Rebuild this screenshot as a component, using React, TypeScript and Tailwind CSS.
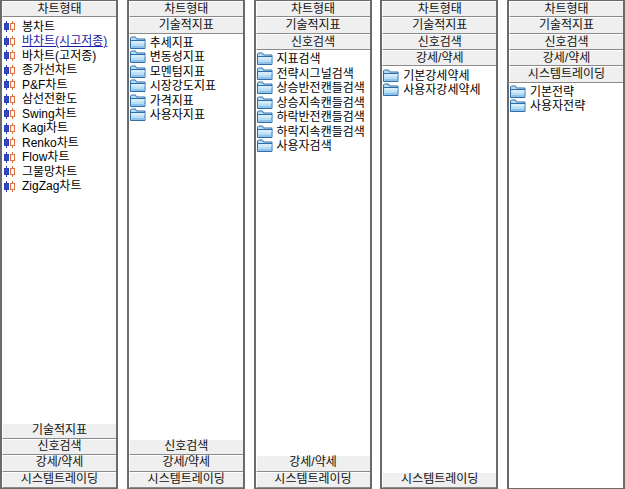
const SECTIONS = ["차트형태", "기술적지표", "신호검색", "강세/약세", "시스템트레이딩"];

const PANELS = [
  {
    open: 0,
    icon: "chart",
    items: ["봉차트", "바차트(시고저종)", "바차트(고저종)", "종가선차트", "P&F차트", "삼선전환도", "Swing차트", "Kagi차트", "Renko차트", "Flow차트", "그물망차트", "ZigZag차트"],
  },
  { open: 1, icon: "folder", items: ["추세지표", "변동성지표", "모멘텀지표", "시장강도지표", "가격지표", "사용자지표"] },
  { open: 2, icon: "folder", items: ["지표검색", "전략시그널검색", "상승반전캔들검색", "상승지속캔들검색", "하락반전캔들검색", "하락지속캔들검색", "사용자검색"] },
  { open: 3, icon: "folder", items: ["기본강세약세", "사용자강세약세"] },
  { open: 4, icon: "folder", items: ["기본전략", "사용자전략"] },
];

function ChartIcon() {
  return (
    <svg width="12" height="13" viewBox="0 0 12 13" className="ml-[1px] mr-[6px] shrink-0">
      <path d="M2.5 1v11" stroke="#2a3fb0" />
      <rect x=".5" y="3.5" width="4" height="6" fill="#2f49c8" stroke="#2a3fb0" />
      <path d="M8.5 1v11" stroke="#e0703f" />
      <rect x="6.5" y="3.5" width="4" height="6" fill="#fff" stroke="#e0703f" />
    </svg>
  );
}

function FolderIcon() {
  return (
    <svg width="16" height="14" viewBox="0 0 16 14" className="mr-[4px] shrink-0">
      <path d="M.5 12.5V2l1-1h4l1 2h8.5v9.5z" fill="#b9def8" stroke="#2f6fa8" />
      <path d="M1 4.5h14" stroke="#2f6fa8" />
      <path d="M1.5 5h13v2.5h-13z" fill="#d6eefc" />
      <path d="M1.5 10h13v2h-13z" fill="#8fc2ea" />
    </svg>
  );
}

function Header({ label, below }: { label: string; below?: boolean }) {
  return (
    <div
      className={
        below
          ? "h-[16.35px] shrink-0 border-b border-l border-t border-b-[#8a8a8a] border-l-white border-t-white bg-[#efefef] text-center text-[12px] leading-[12px] text-[#111]"
          : "h-[16.35px] shrink-0 border-b border-l border-t border-b-[#8a8a8a] border-l-white border-t-white bg-[#efefef] text-center text-[12px] leading-[15px] text-[#111]"
      }
    >
      {label}
    </div>
  );
}

function Panel({ panel }: { panel: (typeof PANELS)[number] }) {
  const top = SECTIONS.slice(0, panel.open + 1);
  const bottom = SECTIONS.slice(panel.open + 1);
  return (
    <div className="flex h-[489px] w-[118px] flex-col border-x-2 border-y border-[#6a6a6a] bg-white">
      {top.map((s) => (
        <Header key={s} label={s} />
      ))}
      <ul className="flex-1 pt-[2px]">
        {panel.items.map((item, i) => (
          <li key={item} className="flex h-[14.5px] items-center pl-[1px] text-[12px] leading-[14px] text-black">
            {panel.icon === "chart" ? <ChartIcon /> : <FolderIcon />}
            <span className={panel.icon === "chart" && i === 1 ? "whitespace-nowrap text-[#1a1aa6] underline" : "whitespace-nowrap"}>{item}</span>
          </li>
        ))}
      </ul>
      {bottom.map((s) => (
        <Header key={s} label={s} below />
      ))}
    </div>
  );
}

export default function App() {
  return (
    <div className="flex h-[489px] w-[625px] justify-between overflow-hidden bg-white font-['Liberation_Sans','Noto_Sans_CJK_KR',sans-serif]">
      {PANELS.map((p) => (
        <Panel key={p.open} panel={p} />
      ))}
    </div>
  );
}
